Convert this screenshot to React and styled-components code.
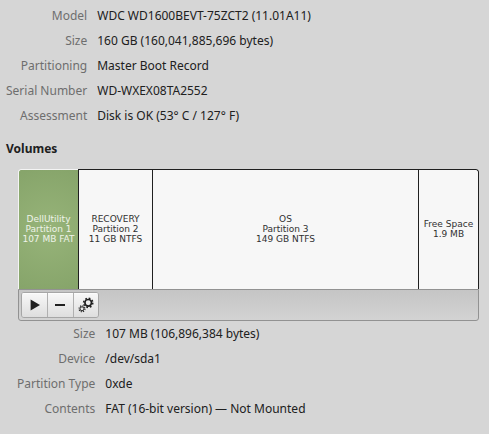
import React, { useState } from "react";
import styled, { createGlobalStyle } from "styled-components";

const drive = [
  ["Model", "WDC WD1600BEVT-75ZCT2 (11.01A11)"],
  ["Size", "160 GB (160,041,885,696 bytes)"],
  ["Partitioning", "Master Boot Record"],
  ["Serial Number", "WD-WXEX08TA2552"],
  ["Assessment", "Disk is OK (53° C / 127° F)"],
];

const volume = [
  ["Size", "107 MB (106,896,384 bytes)"],
  ["Device", "/dev/sda1"],
  ["Partition Type", "0xde"],
  ["Contents", "FAT (16-bit version) — Not Mounted"],
];

const partitions = [
  { lines: ["DellUtility", "Partition 1", "107 MB FAT"], basis: 60 },
  { lines: ["RECOVERY", "Partition 2", "11 GB NTFS"], basis: 74 },
  { lines: ["OS", "Partition 3", "149 GB NTFS"], basis: 120, grow: 1 },
  { lines: ["Free Space", "1.9 MB"], basis: 61 },
];

const Details = ({ rows, indent }) => (
  <DetailList $indent={indent}>
    {rows.map(([label, value]) => (
      <React.Fragment key={label}>
        <Label>{label}</Label>
        <Value>{value}</Value>
      </React.Fragment>
    ))}
  </DetailList>
);

const PlayIcon = () => (
  <svg width="16" height="16" viewBox="0 0 16 16" aria-hidden="true">
    <path d="M3.6 2.6 L13 8 L3.6 13.4 Z" fill="#202020" />
  </svg>
);

const MinusIcon = () => (
  <svg width="16" height="16" viewBox="0 0 16 16" aria-hidden="true">
    <path d="M3 7h10v2H3z" fill="#202020" />
  </svg>
);

const GearsIcon = () => (
  <svg width="16" height="16" viewBox="0 0 16 16" aria-hidden="true" fill="none" stroke="#202020">
    <circle cx="10.2" cy="5.8" r="3.3" strokeWidth="1.7" />
    <circle cx="10.2" cy="5.8" r="4.6" strokeWidth="1.5" strokeDasharray="1.7 1.91" />
    <circle cx="4" cy="11.8" r="2" strokeWidth="1" />
    <circle cx="4" cy="11.8" r="3" strokeWidth="1.1" strokeDasharray="1.2 1.156" />
  </svg>
);

function App() {
  const [selected, setSelected] = useState(0);

  return (
    <Page>
      <GlobalStyle />
      <Details rows={drive} indent={0} />
      <Heading>Volumes</Heading>
      <Volumes>
        <Grid>
          {partitions.map(({ lines, basis, grow }, i) => (
            <Partition
              key={lines[0]}
              $basis={basis}
              $grow={grow}
              $selected={i === selected}
              aria-pressed={i === selected}
              onClick={() => setSelected(i)}
            >
              {lines.map((line) => (
                <Line key={line}>{line}</Line>
              ))}
            </Partition>
          ))}
        </Grid>
        <Toolbar>
          <ButtonGroup>
            <ToolButton aria-label="Mount partition">
              <PlayIcon />
            </ToolButton>
            <ToolButton aria-label="Delete partition">
              <MinusIcon />
            </ToolButton>
            <ToolButton aria-label="More actions">
              <GearsIcon />
            </ToolButton>
          </ButtonGroup>
        </Toolbar>
      </Volumes>
      <Details rows={volume} indent={11} />
    </Page>
  );
}

export default App;

const GlobalStyle = createGlobalStyle`
  * {
    box-sizing: border-box;
  }
  body {
    margin: 0;
    background: #d6d6d6;
    color: #202020;
    font: 12px/25px "Noto Sans", sans-serif;
  }
`;

const Page = styled.main`
  padding: 3px 10px 13px 6px;
`;

const DetailList = styled.dl`
  display: grid;
  grid-template-columns: max-content 1fr;
  column-gap: 10px;
  margin: 0;
  padding-left: ${(p) => p.$indent}px;
`;

const Label = styled.dt`
  color: #6e6e6e;
  text-align: right;
`;

const Value = styled.dd`
  margin: 0;
`;

const Heading = styled.h2`
  margin: 8px 0;
  font-size: 12px;
  line-height: 25px;
  font-weight: 700;
`;

const Volumes = styled.section`
  padding-left: 12px;
`;

const Grid = styled.div`
  display: flex;
  height: 120px;
  border-radius: 3px 3px 0 0;
  overflow: hidden;
`;

const Partition = styled.button`
  display: flex;
  flex: ${(p) => p.$grow || 0} 0 ${(p) => p.$basis}px;
  flex-direction: column;
  align-items: center;
  justify-content: center;
  padding: 0 0 2px;
  border: solid ${(p) => (p.$selected ? "#f4f4f4" : "#202020")};
  border-width: 1px 0 0 1px;
  background: ${(p) =>
    p.$selected ? "radial-gradient(circle, #97b479, #86a46a)" : "#f7f7f7"};
  color: ${(p) => (p.$selected ? "#eef3e8" : "#303030")};
  font: 9px/10px "DejaVu Sans", sans-serif;
  white-space: nowrap;

  &:first-child {
    border-top-left-radius: 3px;
  }
  &:last-child {
    border-right-width: 1px;
    border-top-right-radius: 3px;
  }
`;

const Line = styled.span`
  display: block;
`;

const Toolbar = styled.div`
  display: flex;
  height: 32px;
  padding: 2px;
  border: 1px solid #929292;
  border-radius: 0 0 3px 3px;
  background: linear-gradient(#c5c5c5, #d3d3d3);
`;

const ButtonGroup = styled.div`
  display: flex;
  width: 78px;
  height: 26px;
  border: 1px solid #a6a6a6;
  border-radius: 3px;
  overflow: hidden;
`;

const ToolButton = styled.button`
  display: flex;
  flex: 1 1 26px;
  align-items: center;
  justify-content: center;
  min-width: 0;
  padding: 0;
  border: 0;
  background: linear-gradient(#f8f8f8, #dedede);
  box-shadow: inset 0 1px #fcfcfc;

  & + & {
    border-left: 1px solid #b0b0b0;
  }
`;
